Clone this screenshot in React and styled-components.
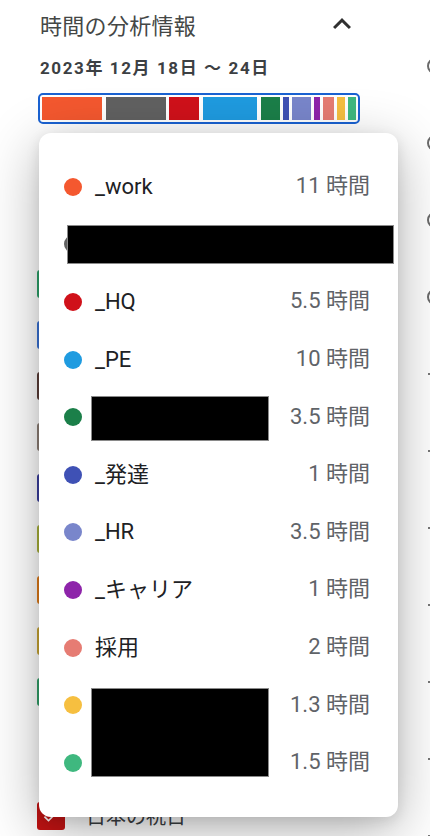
import React from "react";
import styled, { createGlobalStyle } from "styled-components";

const GlobalStyle = createGlobalStyle`
  body {
    margin: 0;
    background: #ffffff;
    font-family: Roboto, "Noto Sans CJK JP", sans-serif;
  }
`;

const usage = [
  { name: "_work", hours: 11, color: "#f4582f" },
  { name: "", hours: 11, color: "#616161", hidden: true },
  { name: "_HQ", hours: 5.5, color: "#d0111a" },
  { name: "_PE", hours: 10, color: "#1f9be0" },
  { name: "", hours: 3.5, color: "#1b7f49" },
  { name: "_発達", hours: 1, color: "#3f51b5" },
  { name: "_HR", hours: 3.5, color: "#7986cb" },
  { name: "_キャリア", hours: 1, color: "#8e24aa" },
  { name: "採用", hours: 2, color: "#e67c73" },
  { name: "", hours: 1.3, color: "#f6bf40" },
  { name: "", hours: 1.5, color: "#3fb87f" },
];

// calendars behind the popup: only the left edge of their boxes shows
const calendars = [
  "#2ea36b",
  "#3a73d6",
  "#5b3e39",
  "#8d7f76",
  "#3b3f9f",
  "#a8b13a",
  "#e07b1a",
  "#c9a634",
  "#33a16a",
];

const Page = styled.div`
  position: relative;
  width: 430px;
  height: 836px;
  overflow: hidden;
  display: flex;
`;

const Main = styled.div`
  width: 390px;
  flex-shrink: 0;
  padding-left: 37px;
`;

const Header = styled.div`
  height: 48px;
  display: flex;
  align-items: center;
  justify-content: space-between;
  padding-left: 3px;
`;

const Title = styled.h2`
  margin: 0;
  font-size: 22px;
  font-weight: 400;
  color: #444746;
  letter-spacing: 0.3px;
`;

const Chevron = styled.svg`
  width: 36px;
  height: 36px;
  margin-right: 67px;
  fill: #303030;
`;

const DateLine = styled.div`
  padding-left: 3px;
  margin-top: 8px;
  font-size: 17px;
  font-weight: 700;
  letter-spacing: 1.6px;
  color: #3c4043;
  line-height: 24px;
`;

const UsageBar = styled.div`
  margin-top: 13px;
  margin-left: 1px;
  width: 314px;
  height: 23px;
  border: 2px solid #1a62d2;
  border-radius: 5px;
  padding: 2px 2px;
  display: flex;
  gap: 3.3px;
  background: #fff;
`;

const Segment = styled.div`
  background: ${(p) => p.color};
  height: 100%;
`;

const CalendarList = styled.div`
  margin-top: 134px;
`;

const CalendarItem = styled.div`
  height: 51px;
  display: flex;
  align-items: center;
  gap: 21px;
  font-size: 20px;
  color: #3c4043;
`;

const CheckBox = styled.div`
  width: 28px;
  height: 28px;
  border-radius: 3px;
  background: ${(p) => p.color};
  display: flex;
  align-items: center;
  justify-content: center;
  flex-shrink: 0;
`;

const SectionGap = styled.div`
  height: 73px;
`;

const Side = styled.div`
  padding-top: 27px;
  display: flex;
  flex-direction: column;
`;

const SideItem = styled.div`
  height: 77px;
  display: flex;
  align-items: center;
  flex-shrink: 0;
`;

const Ring = styled.div`
  width: 12px;
  height: 12px;
  border-radius: 50%;
  border: 2px solid #6b6b6b;
  flex-shrink: 0;
`;

const Tick = styled.div`
  width: 2px;
  height: 2px;
  margin-left: 1px;
  background: #777;
`;

const Popup = styled.div`
  position: absolute;
  top: 133px;
  left: 39px;
  width: 359px;
  box-sizing: border-box;
  padding: 25px 28px 25px 25px;
  background: #fff;
  border-radius: 12px;
  box-shadow: 0 14px 56px rgba(0, 0, 0, 0.3), 0 4px 14px rgba(0, 0, 0, 0.1);
`;

const Row = styled.div`
  height: 57.6px;
  display: grid;
  grid-template-columns: 18px 1fr auto;
  column-gap: 13px;
  align-items: center;
`;

const Dot = styled.span`
  width: 18px;
  height: 18px;
  border-radius: 50%;
  background: ${(p) => p.color};
`;

const Label = styled.span`
  font-size: 22px;
  line-height: 28px;
  color: #202124;
  white-space: nowrap;
`;

const Hours = styled.span`
  font-size: 22px;
  line-height: 28px;
  color: #5f6368;
  text-align: right;
  white-space: nowrap;
  margin-top: -1px;
`;

const Redaction = styled.div`
  position: absolute;
  left: ${(p) => p.x}px;
  top: ${(p) => p.y}px;
  width: ${(p) => p.w}px;
  height: ${(p) => p.h}px;
  box-sizing: border-box;
  background: #000;
  border: 1px solid #8a8a8a;
`;

function Check() {
  return (
    <svg width="20" height="20" viewBox="0 0 24 24">
      <path d="M9 16.17L4.83 12l-1.42 1.41L9 19 21 7l-1.41-1.41z" fill="#fff" />
    </svg>
  );
}

export default function App() {
  return (
    <>
      <GlobalStyle />
      <Page>
        <Main>
          <Header>
            <Title>時間の分析情報</Title>
            <Chevron viewBox="0 0 24 24">
              <path d="M7.41 15.41L12 10.83l4.59 4.58L18 14l-6-6-6 6z" />
            </Chevron>
          </Header>
          <DateLine>2023年 12月 18日 〜 24日</DateLine>
          <UsageBar>
            {usage.map((u, i) => (
              <Segment key={i} color={u.color} style={{ flex: u.hours }} />
            ))}
          </UsageBar>
          <CalendarList>
            {calendars.map((c) => (
              <CalendarItem key={c}>
                <CheckBox color={c}>
                  <Check />
                </CheckBox>
              </CalendarItem>
            ))}
            <SectionGap />
            <CalendarItem>
              <CheckBox color="#c41414">
                <Check />
              </CheckBox>
              日本の祝日
            </CalendarItem>
          </CalendarList>
        </Main>
        <Side>
          {[0, 1, 2, 3].map((i) => (
            <SideItem key={"r" + i}>
              <Ring />
            </SideItem>
          ))}
          {[0, 1, 2, 3, 4, 5, 6].map((i) => (
            <SideItem key={"t" + i}>
              <Tick />
            </SideItem>
          ))}
        </Side>

        <Popup>
          {usage.map((u, i) => (
            <Row key={i}>
              <Dot color={u.color} />
              <Label>{u.name}</Label>
              <Hours>{u.hidden ? "" : `${u.hours} 時間`}</Hours>
            </Row>
          ))}
          <Redaction x={28} y={92} w={327} h={39} />
          <Redaction x={52} y={263} w={178} h={45} />
          <Redaction x={52} y={555} w={178} h={89} />
        </Popup>
      </Page>
    </>
  );
}
